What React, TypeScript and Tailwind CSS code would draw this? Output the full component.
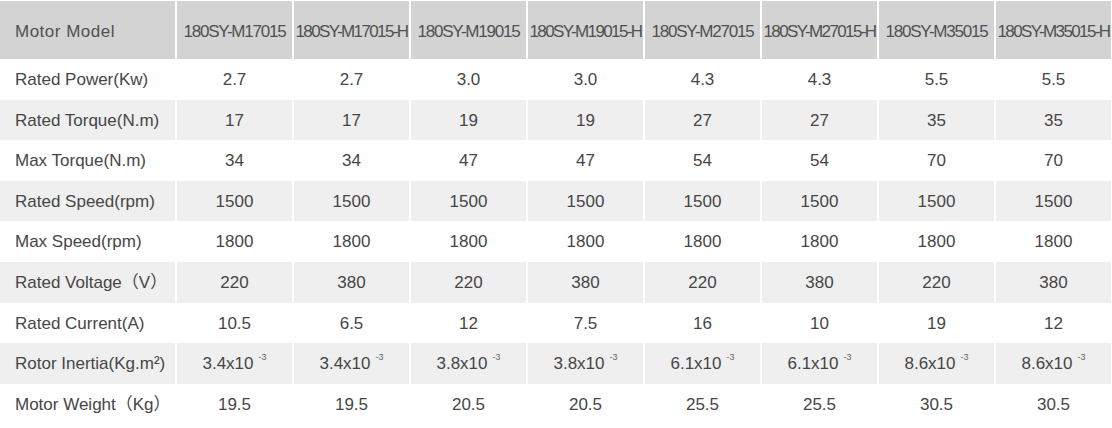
import React from "react";

const models = [
  "180SY-M17015",
  "180SY-M17015-H",
  "180SY-M19015",
  "180SY-M19015-H",
  "180SY-M27015",
  "180SY-M27015-H",
  "180SY-M35015",
  "180SY-M35015-H",
];

type Row = { label: string; values: string[]; sup?: boolean };

const rows: Row[] = [
  { label: "Rated Power(Kw)", values: ["2.7", "2.7", "3.0", "3.0", "4.3", "4.3", "5.5", "5.5"] },
  { label: "Rated Torque(N.m)", values: ["17", "17", "19", "19", "27", "27", "35", "35"] },
  { label: "Max Torque(N.m)", values: ["34", "34", "47", "47", "54", "54", "70", "70"] },
  { label: "Rated Speed(rpm)", values: Array(8).fill("1500") },
  { label: "Max Speed(rpm)", values: Array(8).fill("1800") },
  { label: "Rated Voltage（V）", values: ["220", "380", "220", "380", "220", "380", "220", "380"] },
  { label: "Rated Current(A)", values: ["10.5", "6.5", "12", "7.5", "16", "10", "19", "12"] },
  {
    label: "Rotor Inertia(Kg.m²)",
    values: ["3.4x10", "3.4x10", "3.8x10", "3.8x10", "6.1x10", "6.1x10", "8.6x10", "8.6x10"],
    sup: true,
  },
  { label: "Motor Weight（Kg）", values: ["19.5", "19.5", "20.5", "20.5", "25.5", "25.5", "30.5", "30.5"] },
];

const font = {
  fontFamily: '"Liberation Sans", Arial, "Noto Sans CJK SC", sans-serif',
};

export default function App() {
  return (
    <div className="w-[1112px] h-[428px] bg-white pt-px" style={font}>
      <div className="w-[1111px] grid grid-cols-[175px_repeat(8,minmax(0,1fr))] gap-x-[2px]">
        <div className="h-[58px] bg-[#d3d3d3] flex items-center pl-[15px] pt-[3px] text-[17px] tracking-[0.5px] text-[#505050]">
          Motor Model
        </div>
        {models.map((m) => (
          <div
            key={m}
            className={
              "h-[58px] bg-[#d3d3d3] flex items-center justify-center pt-[3px] text-[17px] text-[#505050] whitespace-nowrap overflow-hidden " +
              (m.endsWith("-H") ? "tracking-[-1.6px]" : "tracking-[-1.2px]")
            }
          >
            {m}
          </div>
        ))}
        {rows.map((r, i) => {
          const bg = i % 2 === 1 ? "bg-[#efefef]" : "bg-white";
          return (
            <React.Fragment key={r.label}>
              <div
                className={`h-[40.6px] ${bg} flex items-center pl-[15px] pt-px text-[17px] text-[#464646] whitespace-nowrap`}
              >
                {r.label}
              </div>
              {r.values.map((v, j) => (
                <div
                  key={j}
                  className={`h-[40.6px] ${bg} flex items-center justify-center pt-px text-[17px] text-[#464646] whitespace-nowrap`}
                >
                  {v}
                  {r.sup && (
                    <span className="text-[9px] ml-[5px] -translate-y-[6px] text-[#666666]">-3</span>
                  )}
                </div>
              ))}
            </React.Fragment>
          );
        })}
      </div>
    </div>
  );
}
